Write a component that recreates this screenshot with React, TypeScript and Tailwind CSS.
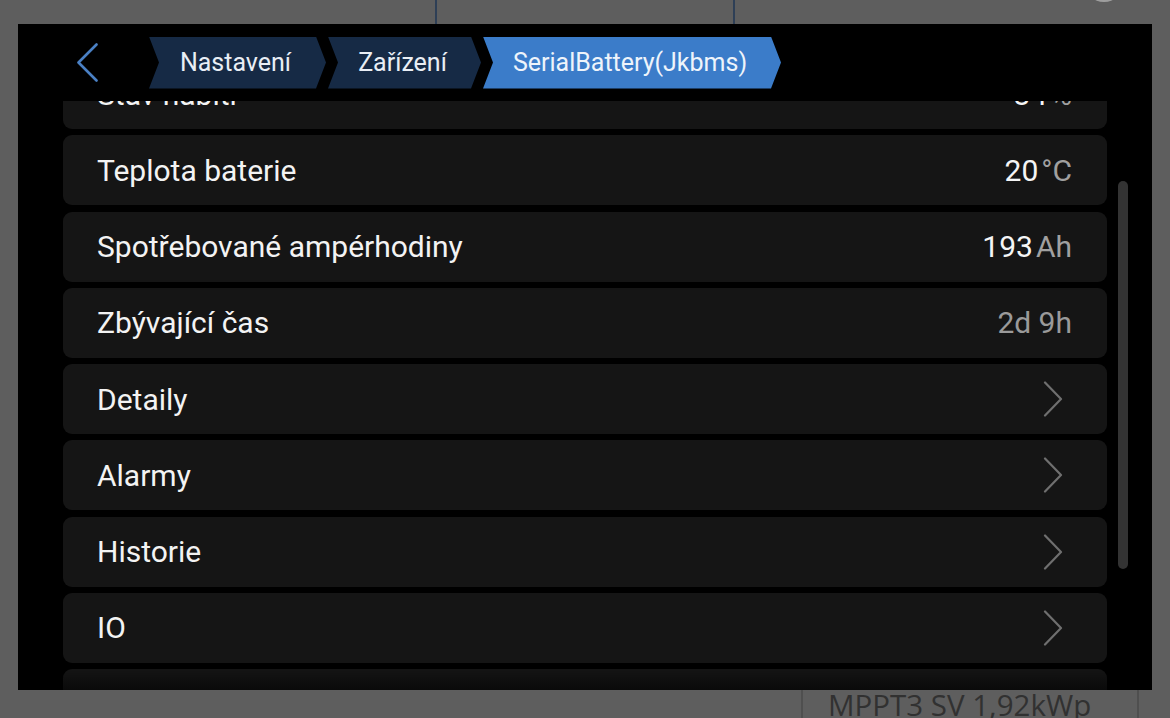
import React from "react";

type Row = {
  label: string;
  value?: string;
  unit?: string;
  dim?: boolean;
  link?: boolean;
};

const rows: Row[] = [
  { label: "Stav nabití", value: "84", unit: "%" },
  { label: "Teplota baterie", value: "20", unit: "°C" },
  { label: "Spotřebované ampérhodiny", value: "193", unit: "Ah" },
  { label: "Zbývající čas", value: "2d 9h", dim: true },
  { label: "Detaily", link: true },
  { label: "Alarmy", link: true },
  { label: "Historie", link: true },
  { label: "IO", link: true },
  { label: "" },
];

function Chevron({ className = "", color }: { className?: string; color: string }) {
  return (
    <svg className={className} viewBox="0 0 20 36" fill="none">
      <polyline points="2,1.5 18,18 2,34.5" stroke={color} strokeWidth="2.2" strokeLinecap="round" strokeLinejoin="round" />
    </svg>
  );
}

function BackArrow() {
  return (
    <svg className="w-[21px] h-[39px]" viewBox="0 0 21 39" fill="none">
      <polyline points="19.5,1.5 1.5,19.5 19.5,37.5" stroke="#4a80c4" strokeWidth="2.6" strokeLinecap="round" strokeLinejoin="round" />
    </svg>
  );
}

function Crumb({ label, active, width }: { label: string; active?: boolean; width: string }) {
  return (
    <div
      className={[
        "h-[52px] flex items-center justify-center pr-[4px] text-[25px]",
        "[clip-path:polygon(0_0,calc(100%_-_10px)_0,100%_50%,calc(100%_-_10px)_100%,0_100%,10px_50%)]",
        active ? "bg-[#3b7cc9] text-[#eef4fb]" : "bg-[#162a45] text-[#e9eef5]",
        width,
      ].join(" ")}
    >
      {label}
    </div>
  );
}

function ListRow({ row }: { row: Row }) {
  return (
    <div className="h-[70px] shrink-0 rounded-[9px] bg-[#151515] flex items-center justify-between pl-[34px] pr-[35px]">
      <span className="text-[30px] text-[#f3f3f3]">{row.label}</span>
      {row.link ? (
        <Chevron className="w-[20px] h-[36px] mr-[9px]" color="#6f6f6f" />
      ) : row.dim ? (
        <span className="text-[30px] text-[#9a9a9a]">{row.value}</span>
      ) : row.value ? (
        <span className="flex items-baseline gap-[3px] text-[30px]">
          <span className="text-[#f5f5f5]">{row.value}</span>
          <span className="text-[#a0a0a0]">{row.unit}</span>
        </span>
      ) : null}
    </div>
  );
}

export default function App() {
  return (
    <div className="w-[1170px] h-[718px] bg-[#5e5e5e] overflow-hidden flex flex-col font-['Roboto',sans-serif]">
      {/* backdrop page, top edge */}
      <div className="h-[24px] shrink-0 relative">
        <div className="absolute left-[435px] top-0 w-[300px] h-[24px] border-x-[2px] border-[#2e3f56]" />
        <div className="absolute left-[1084px] -top-[38px] w-[40px] h-[40px] rounded-full bg-[#9e9e9e]" />
      </div>

      <div className="ml-[18px] w-[1134px] h-[666px] shrink-0 bg-black flex flex-col relative">
        <div className="h-[77px] shrink-0 flex items-center pl-[59px] relative z-10 bg-black">
          <BackArrow />
          <div className="flex items-center gap-[2px] ml-[51px]">
            <Crumb label="Nastavení" width="w-[177px]" />
            <Crumb label="Zařízení" width="w-[153px]" />
            <Crumb label="SerialBattery(Jkbms)" active width="w-[298px]" />
          </div>
        </div>

        <div className="flex-1 overflow-hidden relative">
          <div className="flex flex-col gap-[6.25px] px-[45px] -mt-[42px]">
            {rows.map((r, i) => (
              <ListRow key={i} row={r} />
            ))}
          </div>
          <div className="absolute left-0 right-0 bottom-0 h-[22px] bg-gradient-to-b from-transparent to-black/55" />
          <div className="absolute left-[1100px] top-[80px] w-[10px] h-[388px] rounded-full bg-[#333333]" />
        </div>
      </div>

      {/* backdrop page, bottom edge */}
      <div className="flex-1 relative">
        <div className="absolute left-[801px] top-0 w-[338px] h-[40px] border-x-[2px] border-[#4f4f4f] pl-[25px]">
          <span className="block text-[29.5px] leading-[29px] text-[#313131] whitespace-nowrap font-['Open_Sans',sans-serif]">MPPT3 SV 1,92kWp</span>
        </div>
      </div>
    </div>
  );
}
